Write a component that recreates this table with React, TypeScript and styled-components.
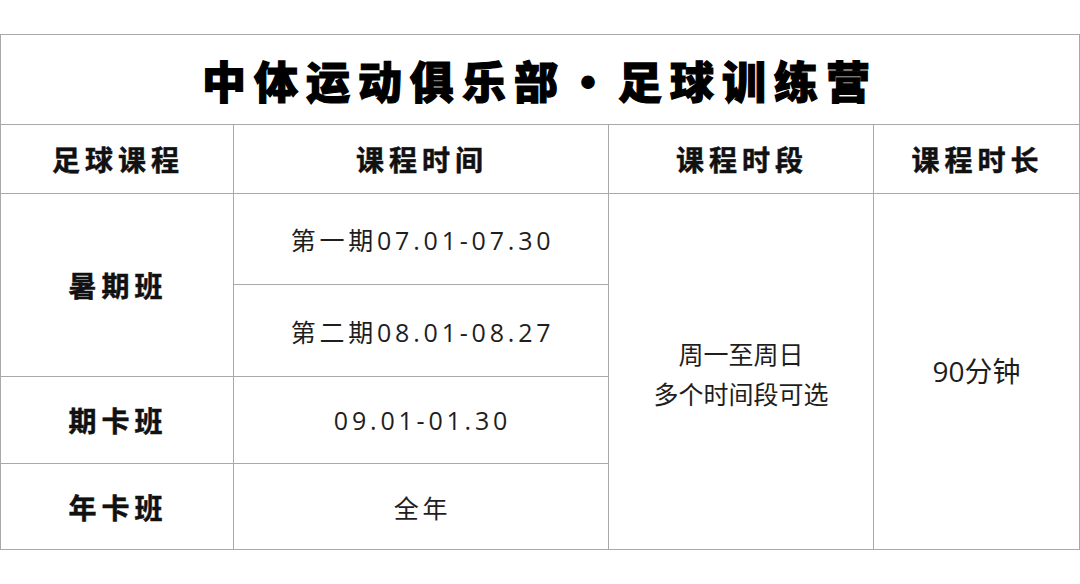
import React from 'react';
import styled, { createGlobalStyle } from 'styled-components';

const GlobalStyle = createGlobalStyle`
  html, body {
    margin: 0;
    padding: 0;
    background: #ffffff;
  }
  body {
    font-family: "Noto Sans CJK SC", "Noto Sans", sans-serif;
    color: #1a1a1a;
  }
`;

type Row = { label?: string; labelSpan?: number; period: string };

const rows: Row[] = [
  { label: '暑期班', labelSpan: 2, period: '第一期07.01-07.30' },
  { period: '第二期08.01-08.27' },
  { label: '期卡班', labelSpan: 1, period: '09.01-01.30' },
  { label: '年卡班', labelSpan: 1, period: '全年' },
];

const heads = ['足球课程', '课程时间', '课程时段', '课程时长'];

export default function App() {
  return (
    <Page>
      <GlobalStyle />
      <Table>
        <Title>中体运动俱乐部·足球训练营</Title>
        {heads.map((h) => (
          <HeadCell key={h}>{h}</HeadCell>
        ))}
        {rows.map((r, i) => (
          <React.Fragment key={r.period}>
            {r.label && (
              <LabelCell $row={i + 3} $span={r.labelSpan ?? 1}>
                {r.label}
              </LabelCell>
            )}
            <PeriodCell $row={i + 3}>{r.period}</PeriodCell>
            {i === 0 && (
              <>
                <SlotCell>
                  <span>周一至周日</span>
                  <span>多个时间段可选</span>
                </SlotCell>
                <LengthCell>90分钟</LengthCell>
              </>
            )}
          </React.Fragment>
        ))}
      </Table>
    </Page>
  );
}

const Page = styled.div`
  padding-top: 34px;
  width: 1080px;
`;

const Table = styled.div`
  display: grid;
  grid-template-columns: 233px 375px 265px 206px;
  grid-template-rows: 90px 69px 91px 92px 87px 86px;
  border-top: 1px solid #a9a9a9;
  border-left: 1px solid #a9a9a9;
`;

const Cell = styled.div`
  display: flex;
  align-items: center;
  justify-content: center;
  border-right: 1px solid #a9a9a9;
  border-bottom: 1px solid #a9a9a9;
  text-align: center;
`;

const Title = styled(Cell)`
  grid-column: 1 / -1;
  font-size: 44px;
  font-weight: 900;
  letter-spacing: 8px;
  color: #000;
  -webkit-text-stroke: 1.2px #000;
`;

const HeadCell = styled(Cell)`
  font-size: 28px;
  font-weight: 700;
  letter-spacing: 5px;
  padding-left: 2px;
  color: #111;
  -webkit-text-stroke: 0.5px #111;
`;

const LabelCell = styled(Cell)<{ $row: number; $span: number }>`
  grid-column: 1;
  grid-row: ${(p) => p.$row} / span ${(p) => p.$span};
  font-size: 28px;
  font-weight: 700;
  letter-spacing: 5px;
  padding-left: 2px;
  color: #111;
  -webkit-text-stroke: 0.5px #111;
`;

const PeriodCell = styled(Cell)<{ $row: number }>`
  grid-column: 2;
  grid-row: ${(p) => p.$row};
  font-family: "Open Sans", "Noto Sans CJK SC", sans-serif;
  font-size: 25px;
  letter-spacing: 3.8px;
  padding-left: 3px;
  color: #1e1e1e;
`;

const SlotCell = styled(Cell)`
  grid-column: 3;
  grid-row: 3 / span 4;
  flex-direction: column;
  font-size: 25px;
  line-height: 40px;
  color: #1e1e1e;
  padding-top: 2px;
`;

const LengthCell = styled(Cell)`
  grid-column: 4;
  grid-row: 3 / span 4;
  font-family: "Open Sans", "Noto Sans CJK SC", sans-serif;
  font-size: 28px;
  color: #1e1e1e;
  padding-bottom: 4px;
`;
